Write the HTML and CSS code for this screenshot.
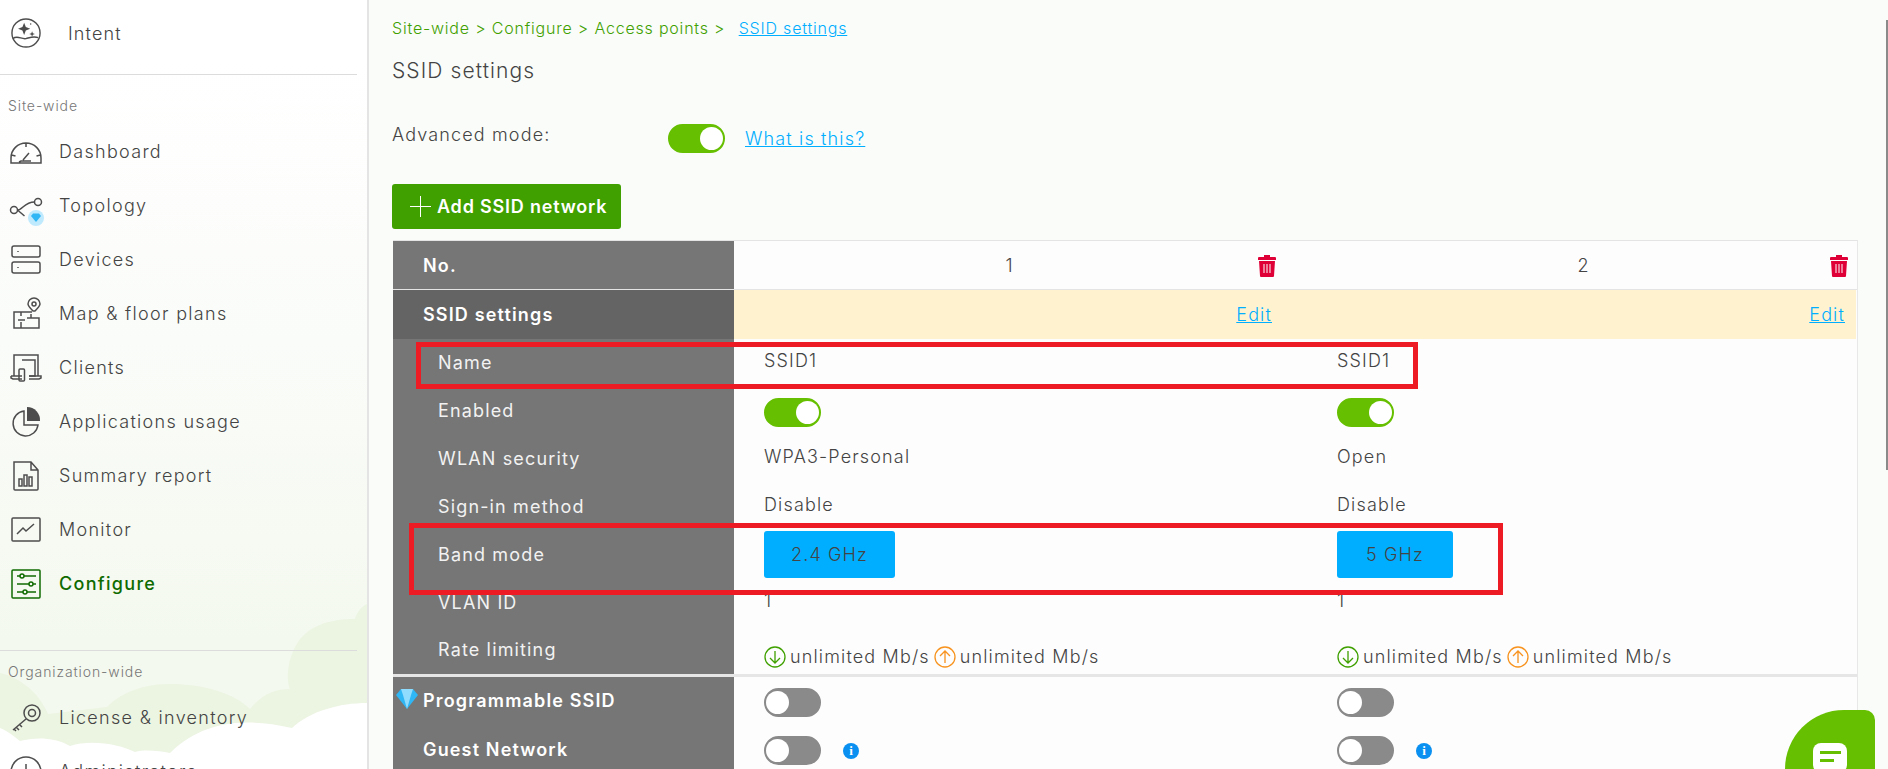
FILE: index.html
```html
<!DOCTYPE html>
<html lang="en">

<head>
  <meta charset="UTF-8">
  <title>SSID settings</title>
  <link rel="stylesheet" href="styles.css">
</head>

<body>
  <div class="page">
    <aside class="sidebar">
      <svg class="clouds" viewBox="0 0 367 210" width="367" height="210">
        <path fill="#ecf4e2" d="M0 114C20 118 40 135 48 155L107 148C125 130 150 125 170 125C205 125 235 135 250 150C262 135 275 130 290 130C285 120 288 90 305 75C320 62 340 60 355 60C355 60 357 50 367 45V210H0Z" />
        <path fill="#fff" d="M0 169C8 172 15 178 20 182C35 178 55 178 70 187C90 180 120 185 135 193C145 190 160 192 170 194C195 170 230 155 292 169C310 152 340 144 367 144V210H0Z" />
      </svg>

      <div class="intent">
        <svg class="icon" viewBox="0 0 32 32">
          <circle cx="16" cy="16" r="15" />
          <path d="M2 22c5-4 9 1 14 0c4-1 8-3 13-1" />
          <path class="solid" d="M14 5l1.800 4.700L20.500 11.500l-4.700 1.800L14 18l-1.800-4.700L7.500 11.500l4.700-1.800Z" />
          <path class="solid" d="M22.500 14l.800 2.200 2.200.800-2.200.800-.800 2.200-.800-2.200-2.200-.800 2.200-.800Z" />
          <circle class="solid" cx="21" cy="6.500" r=".8" />
        </svg>
        <span>Intent</span>
      </div>

      <div class="section-label first">Site-wide</div>
      <div class="nav-item">
        <svg class="icon" viewBox="0 0 32 32">
          <path d="M1 22a15 15 0 0 1 30 0v5H1ZM16 7v4M1.500 19l4 1M30.500 19l-4 1M9 26l2-1h10M13 24l6-7" />
        </svg>
        <span>Dashboard</span>
      </div>
      <div class="nav-item">
        <svg class="icon" viewBox="0 0 32 32">
          <circle cx="4" cy="20" r="3.500" />
          <circle cx="28" cy="12" r="3.500" />
          <path d="M7.500 20c5 0 7-8 17-8M7.500 20l7 6" />
          <circle class="gem-bg" cx="26" cy="28" r="8" />
          <path class="gem" d="M21 26l2-2.500h6l2 2.500-5 6Z" />
        </svg>
        <span>Topology</span>
      </div>
      <div class="nav-item">
        <svg class="icon" viewBox="0 0 32 32">
          <rect x="2" y="2" width="28" height="11" rx="2" />
          <rect x="2" y="18" width="28" height="11" rx="2" />
          <path d="M8 7v1M8 23v1" />
        </svg>
        <span>Devices</span>
      </div>
      <div class="nav-item">
        <svg class="icon" viewBox="0 0 32 32">
          <path d="M22 14H4v16h25V20H17M11 14v4M11 24v6M8 22h7M21 20v-4" />
          <path d="M23 13c-3-3-5-5-5-7a6 6 0 0 1 12 0c0 2-2 4-5 7Z" />
          <circle cx="24" cy="6" r="2" />
        </svg>
        <span>Map &amp; floor plans</span>
      </div>
      <div class="nav-item">
        <svg class="icon" viewBox="0 0 32 32">
          <path d="M4 24V3h24v21M1 24h11M19 24h12v2l-2 1H19M1 24v2l2 1h9" />
          <path d="M12 8h13v16H19" />
          <rect x="9" y="17" width="5.500" height="12" rx="1" />
        </svg>
        <span>Clients</span>
      </div>
      <div class="nav-item">
        <svg class="icon" viewBox="0 0 32 32">
          <path d="M14 5a12.500 12.500 0 1 0 14 14H14Z" />
          <path class="solid" d="M17 1a13 13 0 0 1 13 14H17Z" />
        </svg>
        <span>Applications usage</span>
      </div>
      <div class="nav-item">
        <svg class="icon" viewBox="0 0 32 32">
          <path d="M4 2h17l7 8v19a1 1 0 0 1-1 1H5a1 1 0 0 1-1-1ZM21 2v8h7" />
          <path d="M9 19h3v7H9ZM14 15h3v11h-3ZM19 17h3v9h-3Z" />
        </svg>
        <span>Summary report</span>
      </div>
      <div class="nav-item">
        <svg class="icon" viewBox="0 0 32 32">
          <rect x="2" y="4" width="28" height="23" rx="1" />
          <path d="M7 20l6-6 3 3 8-7" />
        </svg>
        <span>Monitor</span>
      </div>
      <div class="nav-item active">
        <svg class="icon" viewBox="0 0 32 32">
          <rect x="2" y="2" width="28" height="28" rx="1" />
          <path d="M7 8h3M14 8h12M7 16h12M23 16h3M7 24h6M17 24h9" />
          <circle cx="12" cy="8" r="2" />
          <circle cx="21" cy="16" r="2" />
          <circle cx="15" cy="24" r="2" />
        </svg>
        <span>Configure</span>
      </div>

      <div class="section-label org">Organization-wide</div>
      <div class="nav-item">
        <svg class="icon" viewBox="0 0 32 32">
          <circle cx="22" cy="11" r="8" />
          <circle cx="22" cy="11" r="3.500" />
          <path d="M16 17L3 28M6 25l3 3M9 22l3 3M4 27l2 2" />
        </svg>
        <span>License &amp; inventory</span>
      </div>
      <div class="nav-item">
        <svg class="icon" viewBox="0 0 32 32">
          <circle cx="16" cy="16" r="15" />
          <path d="M16 16L8 24M16 8v8h8" />
        </svg>
        <span>Administrators</span>
      </div>
    </aside>

    <main class="content">
      <div class="crumbs">
        Site-wide &gt; Configure &gt; Access points &gt;
        <a href="#">SSID settings</a>
      </div>
      <h1>SSID settings</h1>
      <div class="advanced">
        <span class="advanced-label">Advanced mode:</span>
        <span class="toggle on"></span>
        <a href="#">What is this?</a>
      </div>
      <button class="add-btn"><span class="plus"></span>Add SSID network</button>

      <div class="ssid-table">
        <div class="row head">
          <div class="th strong">No.</div>
          <div class="td col-a center">1
            <svg class="trash" viewBox="0 0 18 22">
              <path d="M6 0h6v2h5a1 1 0 0 1 1 1v2H0V3a1 1 0 0 1 1-1h5Z" />
              <path fill-rule="evenodd" d="M1 6h16l-1 15a1 1 0 0 1-1 1H3a1 1 0 0 1-1-1ZM5.500 9v9h1V9ZM8.500 9v9h1V9ZM11.500 9v9h1V9Z" />
            </svg>
          </div>
          <div class="td col-b center">2
            <svg class="trash" viewBox="0 0 18 22">
              <path d="M6 0h6v2h5a1 1 0 0 1 1 1v2H0V3a1 1 0 0 1 1-1h5Z" />
              <path fill-rule="evenodd" d="M1 6h16l-1 15a1 1 0 0 1-1 1H3a1 1 0 0 1-1-1ZM5.500 9v9h1V9ZM8.500 9v9h1V9ZM11.500 9v9h1V9Z" />
            </svg>
          </div>
        </div>

        <div class="row section">
          <div class="th strong dark">SSID settings</div>
          <div class="td col-a center"><a class="edit" href="#">Edit</a></div>
          <div class="td col-b center"><a class="edit" href="#">Edit</a></div>
        </div>

        <div class="row">
          <div class="th sub">Name</div>
          <div class="td col-a val">SSID1</div>
          <div class="td col-b val">SSID1</div>
        </div>
        <div class="row">
          <div class="th sub">Enabled</div>
          <div class="td col-a ctl"><span class="toggle on"></span></div>
          <div class="td col-b ctl"><span class="toggle on"></span></div>
        </div>
        <div class="row">
          <div class="th sub">WLAN security</div>
          <div class="td col-a val">WPA3-Personal</div>
          <div class="td col-b val">Open</div>
        </div>
        <div class="row">
          <div class="th sub">Sign-in method</div>
          <div class="td col-a val">Disable</div>
          <div class="td col-b val">Disable</div>
        </div>
        <div class="row">
          <div class="th sub">Band mode</div>
          <div class="td col-a ctl"><span class="band wide">2.4 GHz</span></div>
          <div class="td col-b ctl"><span class="band">5 GHz</span></div>
        </div>
        <div class="row">
          <div class="th sub">VLAN ID</div>
          <div class="td col-a val">1</div>
          <div class="td col-b val">1</div>
        </div>
        <div class="row rate">
          <div class="th sub">Rate limiting</div>
          <div class="td col-a ctl">
            <svg class="arrow down" viewBox="0 0 22 22"><circle cx="11" cy="11" r="10" /><path d="M11 5v12M6 12l5 5 5-5" /></svg>
            <span>unlimited Mb/s</span>
            <svg class="arrow up" viewBox="0 0 22 22"><circle cx="11" cy="11" r="10" /><path d="M11 17V5M6 10l5-5 5 5" /></svg>
            <span>unlimited Mb/s</span>
          </div>
          <div class="td col-b ctl">
            <svg class="arrow down" viewBox="0 0 22 22"><circle cx="11" cy="11" r="10" /><path d="M11 5v12M6 12l5 5 5-5" /></svg>
            <span>unlimited Mb/s</span>
            <svg class="arrow up" viewBox="0 0 22 22"><circle cx="11" cy="11" r="10" /><path d="M11 17V5M6 10l5-5 5 5" /></svg>
            <span>unlimited Mb/s</span>
          </div>
        </div>

        <div class="row">
          <div class="th strong gem-row">
            <svg class="gem-icon" viewBox="0 0 22 20">
              <path fill="#2fb6f5" d="M5 0h12l5 6-11 14L0 6Z" />
              <path fill="#8fdcff" d="M5 0h12l-2 6H7ZM7 6h8l-4 14Z" />
            </svg>
            Programmable SSID
          </div>
          <div class="td col-a ctl"><span class="toggle"></span></div>
          <div class="td col-b ctl"><span class="toggle"></span></div>
        </div>
        <div class="row">
          <div class="th strong">Guest Network</div>
          <div class="td col-a ctl"><span class="toggle"></span><span class="info">i</span></div>
          <div class="td col-b ctl"><span class="toggle"></span><span class="info">i</span></div>
        </div>
      </div>

      <div class="mark first-mark"></div>
      <div class="mark second-mark"></div>
    </main>
  </div>

  <div class="scrollbar"></div>
  <div class="chat">
    <svg viewBox="0 0 34 30" width="34" height="30">
      <path fill="#fff" d="M8 0h18a8 8 0 0 1 8 8v14a8 8 0 0 1-8 8H8a8 8 0 0 1-8-8V8a8 8 0 0 1 8-8Z" />
      <path fill="#66bf00" d="M7 8h21v3H7ZM7 16h14v3H7Z" />
    </svg>
  </div>
</body>

</html>
```

FILE: styles.css
```css
html,
body {
  margin: 0;
  padding: 0;
  height: 769px;
  overflow: hidden;
}

body {
  font-family: Inter, "Noto Sans", sans-serif;
  font-weight: 300;
  letter-spacing: 1.15px;
  color: #444;
  background: #fafcf9;
}

a {
  color: #00aeff;
  text-decoration: underline;
}

.page {
  display: flex;
  height: 769px;
}

/* sidebar */
.sidebar {
  position: relative;
  flex: 0 0 367px;
  height: 769px;
  overflow: hidden;
  background: linear-gradient(#fff 60px, #fafcf9 340px, #f4f9ef 640px);
  border-right: 2px solid #e4e4e4;
}

.clouds {
  position: absolute;
  left: 0;
  bottom: 0;
}

.intent,
.nav-item,
.section-label {
  position: relative;
}

.intent {
  box-sizing: border-box;
  display: flex;
  align-items: center;
  height: 75px;
  margin-right: 10px;
  padding: 0 0 8px 11px;
  border-bottom: 1px solid #dcdcdc;
  font-size: 18px;
}

.intent span {
  margin-left: 27px;
}

.intent .icon {
  width: 30px;
  height: 30px;
}

.section-label {
  font-size: 14px;
  letter-spacing: 0.9px;
  color: #777;
  padding-left: 8px;
  line-height: 20px;
}

.section-label.first {
  margin-top: 21px;
  margin-bottom: 9px;
}

.section-label.org {
  margin-top: 39px;
  margin-right: 10px;
  padding-top: 11px;
  border-top: 1px solid #dcdcdc;
  margin-bottom: 9px;
}

.nav-item {
  display: flex;
  align-items: center;
  height: 54px;
  padding-left: 10px;
  font-size: 18px;
  letter-spacing: 1.3px;
}

.nav-item span {
  margin-left: 17px;
  margin-top: -2px;
}

.icon {
  flex: none;
  width: 32px;
  height: 32px;
  overflow: visible;
  fill: none;
  stroke: #4d4d4d;
  stroke-width: 1.5;
}

.icon .solid {
  fill: #4d4d4d;
  stroke: none;
}

.icon .gem-bg {
  fill: #bfe9fd;
  stroke: none;
}

.icon .gem {
  fill: #2fb6f5;
  stroke: none;
}

.nav-item.active {
  color: #0f6b00;
  font-weight: 500;
}

.nav-item.active .icon {
  stroke: #0f6b00;
}

/* main */
.content {
  position: relative;
  flex: 1;
  padding: 17px 0 0 23px;
}

.crumbs {
  font-size: 16px;
  letter-spacing: 0.8px;
  line-height: 22px;
  color: #3fa000;
}

.crumbs a {
  margin-left: 8px;
}

h1 {
  margin: 18px 0 0;
  font-size: 21px;
  letter-spacing: 1.1px;
  line-height: 28px;
  font-weight: 300;
}

.advanced {
  display: flex;
  align-items: center;
  margin-top: 38px;
  height: 30px;
  font-size: 18px;
}

.advanced-label {
  width: 276px;
  margin-top: -8px;
}

.advanced a {
  margin-left: 20px;
}

.toggle {
  display: inline-block;
  flex: none;
  box-sizing: border-box;
  width: 57px;
  height: 29px;
  border-radius: 15px;
  border: 2px solid #8a8a8a;
  background: #8a8a8a;
  position: relative;
}

.toggle::after {
  content: "";
  position: absolute;
  left: 0;
  top: 1px;
  width: 23px;
  height: 23px;
  border-radius: 50%;
  background: #fff;
}

.toggle.on {
  border-color: #66bf00;
  background: #66bf00;
}

.toggle.on::after {
  left: 30px;
}

.td .toggle {
  margin-top: 2px;
}

.add-btn {
  display: flex;
  align-items: center;
  height: 45px;
  width: 229px;
  margin-top: 31px;
  padding: 0 0 0 18px;
  border: 0;
  border-radius: 3px;
  background: #3fa000;
  color: #fff;
  font: 600 18px Inter, "Noto Sans", sans-serif;
  letter-spacing: 0.8px;
}

.plus {
  width: 21px;
  height: 21px;
  margin-right: 6px;
  background: linear-gradient(#fff, #fff) center / 100% 1px no-repeat,
    linear-gradient(#fff, #fff) center / 1px 100% no-repeat;
}

/* table */
.ssid-table {
  margin-top: 11px;
  margin-left: 1px;
  width: 1464px;
  border-top: 1px solid #e4e4e4;
  border-right: 1px solid #e8e8e8;
  background: #fdfdfd;
}

.row {
  box-sizing: border-box;
  display: grid;
  grid-template-columns: 341px 573px 549px;
  height: 48px;
}

.th {
  display: flex;
  align-items: center;
  background: #767676;
  color: #f2f2f2;
  font-size: 18px;
  font-weight: 400;
}

.th.strong {
  position: relative;
  padding-left: 30px;
  font-weight: 600;
  color: #fff;
}

.th.gem-row {
  padding-bottom: 2px;
}

.th.dark {
  background: #646464;
}

.th.sub {
  padding-left: 45px;
  padding-bottom: 2px;
}

.head,
.section {
  height: 49px;
}

.head {
  border-bottom: 1px solid #e4e4e4;
}

.td {
  display: flex;
  align-items: center;
  font-size: 18px;
}

.td.center {
  position: relative;
  justify-content: center;
}

.td.col-a.center {
  padding-right: 22px;
}

.td.col-b.center {
  padding-left: 4px;
}

.td.val,
.td.ctl {
  padding-left: 30px;
}

.td.val {
  padding-bottom: 6px;
}

.section .td {
  background: #fff3cf;
}

.edit {
  position: absolute;
  right: 11px;
}

.col-a .edit {
  right: 35px;
}

.trash {
  position: absolute;
  right: 8px;
  top: 14px;
  width: 18px;
  height: 22px;
  fill: #df0038;
}

.col-a .trash {
  right: 31px;
}

.rate {
  height: 50px;
  border-bottom: 3px solid #e6e6e6;
}

.rate .td {
  padding-top: 12px;
}

.arrow {
  flex: none;
  width: 22px;
  height: 22px;
  margin-right: 4px;
  fill: none;
  stroke-width: 1.3;
}

.arrow.down {
  stroke: #3fa000;
}

.arrow.up {
  stroke: #f7931e;
  margin-left: 4px;
}

.band {
  display: flex;
  align-items: center;
  justify-content: center;
  align-self: flex-start;
  width: 116px;
  height: 47px;
  border-radius: 3px;
  background: #00aeff;
  color: #444;
}

.band.wide {
  width: 131px;
}

.gem-icon {
  position: absolute;
  left: 3px;
  top: 12px;
  width: 22px;
  height: 20px;
}

.info {
  width: 16px;
  height: 16px;
  margin-left: 22px;
  margin-top: 3px;
  border-radius: 50%;
  background: #0a90f0;
  color: #fff;
  font: 700 13px/16px "Liberation Serif", serif;
  letter-spacing: 0;
  text-align: center;
}

/* overlays */
.mark {
  position: absolute;
  box-sizing: border-box;
  border: 5px solid #ed1c24;
  pointer-events: none;
}

.first-mark {
  left: 47px;
  top: 342px;
  width: 1002px;
  height: 47px;
}

.second-mark {
  left: 40px;
  top: 523px;
  width: 1094px;
  height: 72px;
}

.scrollbar {
  position: fixed;
  top: 20px;
  right: 0;
  width: 2px;
  height: 450px;
  background: #8a8a8a;
}

.chat {
  position: fixed;
  left: 1785px;
  top: 710px;
  width: 90px;
  height: 59px;
  background: #66bf00;
  border-radius: 59px 10px 0 0;
  display: flex;
  justify-content: center;
}

.chat svg {
  margin-top: 33px;
}
```
